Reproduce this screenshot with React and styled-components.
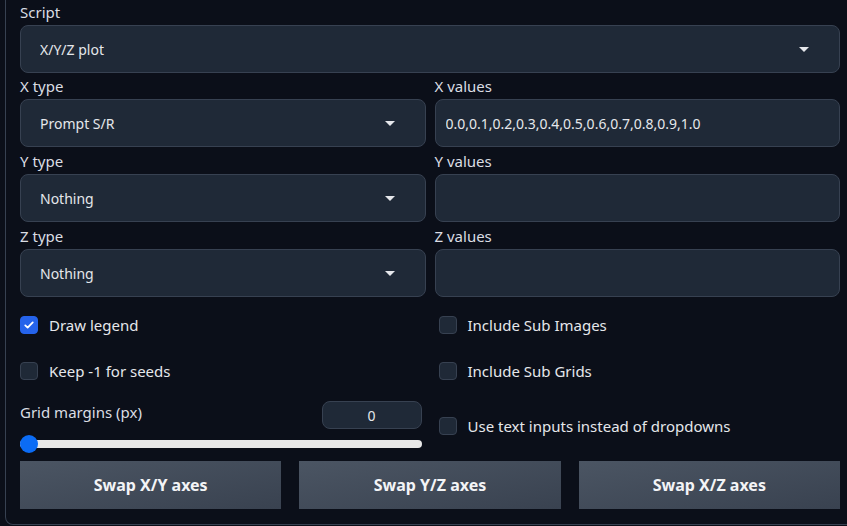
import React from 'react';
import styled, { createGlobalStyle } from 'styled-components';

const GlobalStyle = createGlobalStyle`
  html, body {
    margin: 0;
    padding: 0;
    background: #0b0f19;
    overflow: hidden;
  }
  body {
    font-family: "Noto Sans", "Open Sans", sans-serif;
    color: #d1d5db;
  }
`;

const Panel = styled.div`
  box-sizing: border-box;
  width: 850px;
  margin-left: 5px;
  padding: 2px 14px 15px 14px;
  border: 1px solid #374151;
  border-top: none;
  border-radius: 0 0 8px 8px;
  display: flex;
  flex-direction: column;
  gap: 3px;
`;

const Field = styled.div`
  display: flex;
  flex-direction: column;
`;

const Label = styled.div`
  font-size: 15px;
  line-height: 20px;
  color: #dadde3;
  margin-bottom: 3px;
`;

const TwoCols = styled.div`
  display: grid;
  grid-template-columns: 1fr 1fr;
  column-gap: 9px;
  row-gap: 4px;
`;

const Box = styled.div`
  box-sizing: border-box;
  height: 48px;
  background: #1f2937;
  border: 1px solid #374151;
  border-radius: 8px;
  display: flex;
  align-items: center;
  padding: 0 ${p => (p.$inset ? 10 : 19)}px;
  font-size: 14px;
  color: #e5e7eb;
`;

const Value = styled.span`
  flex: 1;
  white-space: nowrap;
  overflow: hidden;
`;

const Caret = styled.span`
  width: 0;
  height: 0;
  border-left: 5px solid transparent;
  border-right: 5px solid transparent;
  border-top: 5px solid #e5e7eb;
  margin-right: 11px;
`;

const Options = styled.div`
  display: grid;
  grid-template-columns: 1fr 1fr;
  column-gap: 9px;
  margin-top: 11px;
`;

const Column = styled.div`
  display: flex;
  flex-direction: column;
`;

const CheckRow = styled.label`
  display: flex;
  align-items: center;
  gap: 11px;
  height: 28px;
  margin-top: ${p => p.$top || 0}px;
  padding-left: ${p => p.$indent || 0}px;
  font-size: 15px;
  color: #e5e7eb;
`;

const Check = styled.span`
  box-sizing: border-box;
  width: 18px;
  height: 18px;
  border-radius: 4px;
  background: ${p => (p.$on ? '#2563eb' : '#1f2937')};
  border: 1px solid ${p => (p.$on ? '#2563eb' : '#374151')};
  display: flex;
  align-items: center;
  justify-content: center;
`;

const SliderBlock = styled.div`
  display: flex;
  flex-direction: column;
  gap: 11px;
  margin-top: 16px;
`;

const SliderHead = styled.div`
  display: flex;
  justify-content: space-between;
  align-items: flex-start;
  padding-right: 4px;
`;

const SliderLabel = styled.span`
  font-size: 15px;
  line-height: 22px;
  color: #dadde3;
`;

const NumberBox = styled.div`
  box-sizing: border-box;
  width: 100px;
  height: 28px;
  background: #1f2937;
  border: 1px solid #374151;
  border-radius: 8px;
  display: flex;
  align-items: center;
  justify-content: center;
  font-size: 14px;
  color: #e5e7eb;
`;

const Track = styled.div`
  position: relative;
  height: 8px;
  margin-right: 4px;
  border-radius: 4px;
  background: #e8e8e8;
`;

const Thumb = styled.span`
  position: absolute;
  left: 0;
  top: 50%;
  width: 18px;
  height: 18px;
  margin-top: -9px;
  border-radius: 50%;
  background: #0b6cf5;
`;

const Buttons = styled.div`
  display: grid;
  grid-template-columns: repeat(3, 1fr);
  column-gap: 18px;
  margin-top: 10px;
`;

const Button = styled.button`
  height: 48px;
  border: none;
  background: linear-gradient(to bottom right, #4b5563, #394250);
  color: #f3f4f6;
  font-family: "Noto Sans", "Open Sans", sans-serif;
  font-weight: 700;
  font-size: 16px;
`;

const Tick = () => (
  <svg width="12" height="12" viewBox="0 0 16 16">
    <path d="M3 8.5l3.2 3L13 4.5" fill="none" stroke="#fff" strokeWidth="2.4" strokeLinecap="round" strokeLinejoin="round" />
  </svg>
);

const Select = ({ label, value }) => (
  <Field>
    <Label>{label}</Label>
    <Box>
      <Value>{value}</Value>
      <Caret />
    </Box>
  </Field>
);

const TextField = ({ label, value }) => (
  <Field>
    <Label>{label}</Label>
    <Box $inset>
      <Value>{value}</Value>
    </Box>
  </Field>
);

export default function App() {
  return (
    <>
      <GlobalStyle />
      <Panel>
        <Select label="Script" value="X/Y/Z plot" />
        <TwoCols>
          <Select label="X type" value="Prompt S/R" />
          <TextField label="X values" value="0.0,0.1,0.2,0.3,0.4,0.5,0.6,0.7,0.8,0.9,1.0" />
          <Select label="Y type" value="Nothing" />
          <TextField label="Y values" value="" />
          <Select label="Z type" value="Nothing" />
          <TextField label="Z values" value="" />
        </TwoCols>
        <Options>
          <Column>
            <CheckRow><Check $on><Tick /></Check>Draw legend</CheckRow>
            <CheckRow $top={18}><Check />Keep -1 for seeds</CheckRow>
            <SliderBlock>
              <SliderHead>
                <SliderLabel>Grid margins (px)</SliderLabel>
                <NumberBox>0</NumberBox>
              </SliderHead>
              <Track><Thumb /></Track>
            </SliderBlock>
          </Column>
          <Column>
            <CheckRow $indent={4}><Check />Include Sub Images</CheckRow>
            <CheckRow $indent={4} $top={18}><Check />Include Sub Grids</CheckRow>
            <CheckRow $indent={4} $top={27}><Check />Use text inputs instead of dropdowns</CheckRow>
          </Column>
        </Options>
        <Buttons>
          <Button>Swap X/Y axes</Button>
          <Button>Swap Y/Z axes</Button>
          <Button>Swap X/Z axes</Button>
        </Buttons>
      </Panel>
    </>
  );
}
